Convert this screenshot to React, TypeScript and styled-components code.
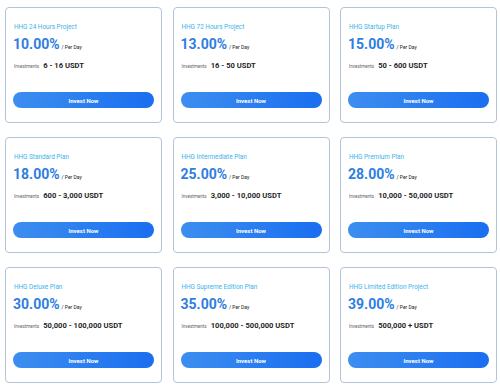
import React from "react";
import styled, { createGlobalStyle } from "styled-components";

const Global = createGlobalStyle`
  html, body { margin: 0; padding: 0; background: #ffffff; }
  body { font-family: Roboto, "Liberation Sans", Arial, sans-serif; }
  * { box-sizing: border-box; }
`;

const Grid = styled.div`
  display: grid;
  grid-template-columns: repeat(3, 157px);
  column-gap: 10.5px;
  row-gap: 14px;
  padding: 7px 5px 4px 5px;
  width: 500px;
`;

const Card = styled.div`
  height: 116px;
  border: 1px solid #b3c4da;
  border-radius: 4px;
  padding: 15px 7px 0 7px;
  display: flex;
  flex-direction: column;
  background: #fff;
`;

const Title = styled.div`
  font-size: 6.4px;
  line-height: 8px;
  color: #40b2ea;
  font-weight: 400;
  padding-left: 1px;
`;

const RateRow = styled.div`
  display: flex;
  align-items: baseline;
  margin-top: 5px;
  height: 16px;
`;

const Rate = styled.span`
  font-size: 14px;
  font-weight: 700;
  color: #2e7ee0;
`;

const PerDay = styled.span`
  font-size: 5px;
  color: #222;
  margin-left: 2px;
`;

const InvestRow = styled.div`
  display: flex;
  align-items: baseline;
  margin-top: 9px;
  padding-left: 1px;
`;

const InvestLabel = styled.span`
  font-size: 4.6px;
  color: #666;
  margin-right: 4px;
`;

const InvestValue = styled.span`
  font-size: 7.6px;
  font-weight: 700;
  color: #1f1f1f;
`;

const Button = styled.button`
  margin-top: auto;
  margin-bottom: 14px;
  height: 16px;
  width: 100%;
  border: none;
  border-radius: 8px;
  background: linear-gradient(90deg, #3d8ef0 0%, #1a6ef0 100%);
  color: #fff;
  font-family: Roboto, "Liberation Sans", Arial, sans-serif;
  font-size: 6px;
  font-weight: 700;
  padding: 0;
  cursor: pointer;
`;

const plans = [
  { title: "HHG 24 Hours Project", rate: "10.00%", range: "6 - 16 USDT" },
  { title: "HHG 72 Hours Project", rate: "13.00%", range: "16 - 50 USDT" },
  { title: "HHG Startup Plan", rate: "15.00%", range: "50 - 600 USDT" },
  { title: "HHG Standard Plan", rate: "18.00%", range: "600 - 3,000 USDT" },
  { title: "HHG Intermediate Plan", rate: "25.00%", range: "3,000 - 10,000 USDT" },
  { title: "HHG Premium Plan", rate: "28.00%", range: "10,000 - 50,000 USDT" },
  { title: "HHG Deluxe Plan", rate: "30.00%", range: "50,000 - 100,000 USDT" },
  { title: "HHG Supreme Edition Plan", rate: "35.00%", range: "100,000 - 500,000 USDT" },
  { title: "HHG Limited Edition Project", rate: "39.00%", range: "500,000 + USDT" },
];

export default function App() {
  return (
    <>
      <Global />
      <Grid>
        {plans.map((p) => (
          <Card key={p.title}>
            <Title>{p.title}</Title>
            <RateRow>
              <Rate>{p.rate}</Rate>
              <PerDay>/ Per Day</PerDay>
            </RateRow>
            <InvestRow>
              <InvestLabel>Investments</InvestLabel>
              <InvestValue>{p.range}</InvestValue>
            </InvestRow>
            <Button>Invest Now</Button>
          </Card>
        ))}
      </Grid>
    </>
  );
}
